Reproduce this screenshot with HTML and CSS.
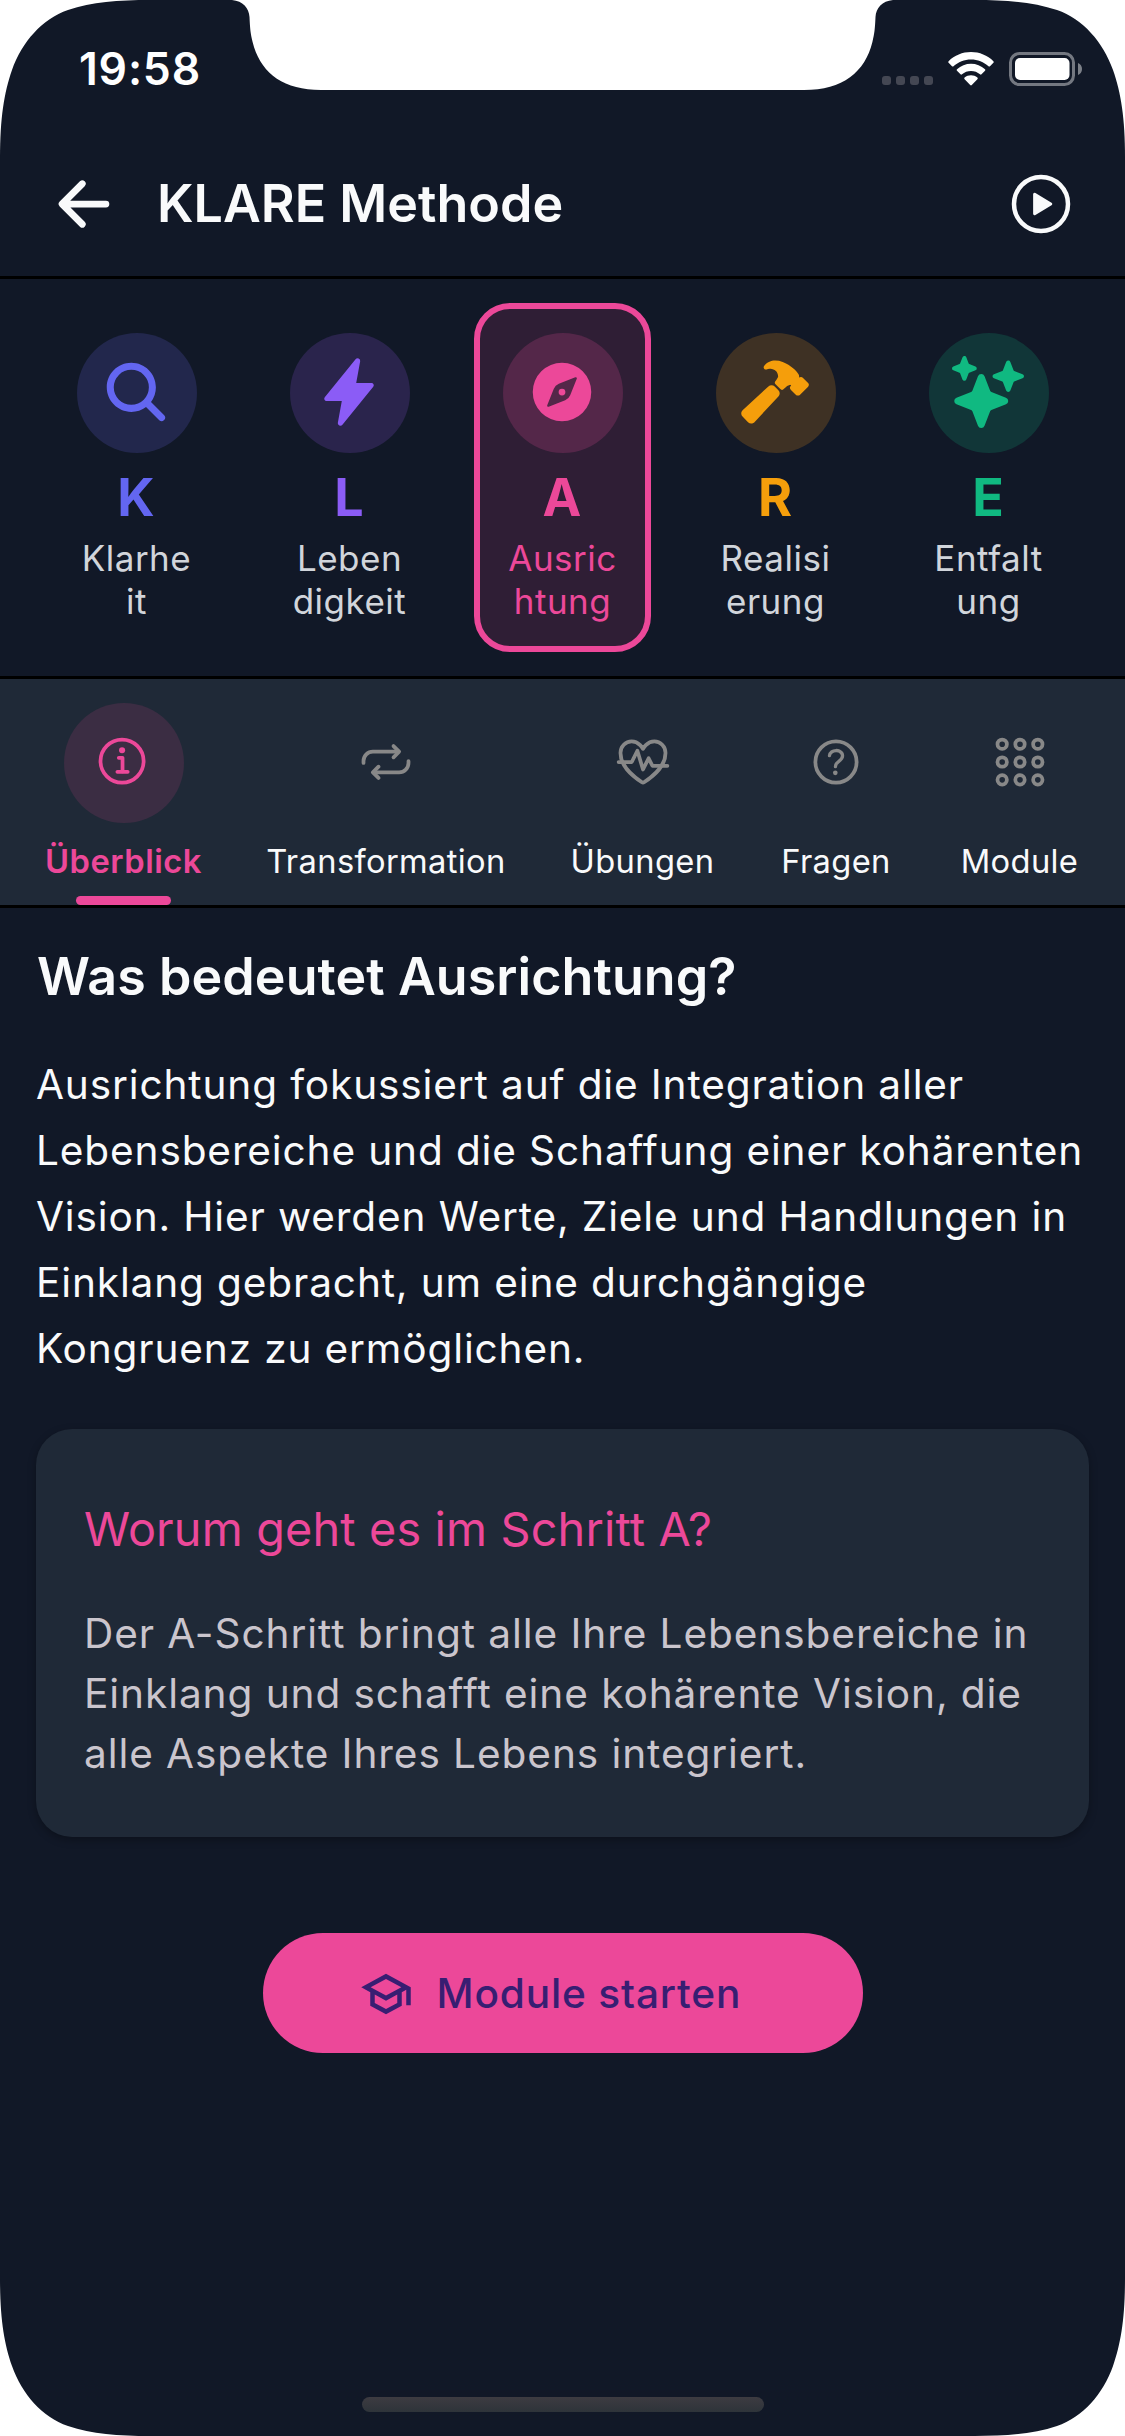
FILE: index.html
```html
<!DOCTYPE html>
<html lang="de">
<head>
<meta charset="utf-8">
<title>KLARE Methode</title>
<link rel="stylesheet" href="styles.css">
</head>
<body>
<div class="screen">
  <div class="statusbar">
    <span class="time">19:58</span>
    <div class="status-icons">
      <span class="signal"><i></i><i></i><i></i><i></i></span>
      <svg class="wifi" viewBox="0 0 46 34" width="46" height="34">
        <path d="M23 0C31.5 0 39.500 3.300 45.400 9.200a1.100 1.100 0 0 1 0 1.500L42 14.200a1.100 1.100 0 0 1-1.500 0C35.800 9.800 29.600 7.400 23 7.400S10.200 9.800 5.500 14.200a1.100 1.100 0 0 1-1.500 0L.6 10.700a1.100 1.100 0 0 1 0-1.500C6.500 3.300 14.500 0 23 0Z"/>
        <path d="M23 11.700c5.200 0 10.200 2 14 5.500a1.100 1.100 0 0 1 0 1.600l-3.500 3.500a1.100 1.100 0 0 1-1.500 0C29.500 20.200 26.400 19 23 19s-6.500 1.200-9 3.300a1.100 1.100 0 0 1-1.500 0L9 18.800a1.100 1.100 0 0 1 0-1.600c3.800-3.500 8.800-5.500 14-5.500Z"/>
        <path d="M23 23.300c2.400 0 4.600.8 6.400 2.300a1.100 1.100 0 0 1 0 1.600l-5.600 5.900a1.100 1.100 0 0 1-1.600 0l-5.600-5.900a1.100 1.100 0 0 1 0-1.600c1.800-1.500 4-2.300 6.400-2.300Z"/>
      </svg>
      <svg class="battery" viewBox="0 0 73 34" width="73" height="34">
        <rect x="1.500" y="1.500" width="63" height="31" rx="9" fill="none" stroke="#fff" stroke-opacity=".42" stroke-width="3"/>
        <rect x="6" y="6" width="54.500" height="22" rx="5" fill="#fff"/>
        <path d="M69 11c2.500 1 4 3.300 4 6s-1.500 5-4 6z" fill="#fff" fill-opacity=".45"/>
      </svg>
    </div>
  </div>

  <header class="header">
    <svg class="icon72" viewBox="0 0 512 512"><path d="M244 400 100 256l144-144M120 256h292" fill="none" stroke="currentColor" stroke-width="48" stroke-linecap="round" stroke-linejoin="round"/></svg>
    <h1 class="title">KLARE Methode</h1>
    <svg class="icon72" viewBox="0 0 512 512"><circle cx="256" cy="256" r="192" fill="none" stroke="currentColor" stroke-width="32"/><path fill="currentColor" d="M216.320 334.440l114.450-69.140a10.890 10.890 0 0 0 0-18.600l-114.450-69.140a10.780 10.780 0 0 0-16.320 9.310v138.260a10.780 10.780 0 0 0 16.320 9.310z"/></svg>
  </header>

  <nav class="steps">
    <div class="step step-k">
      <span class="step-icon"><svg class="icon72" viewBox="0 0 512 512"><path d="M456.690 421.390L362.600 327.300a173.810 173.810 0 0 0 34.840-104.580C397.440 126.380 319.060 48 222.720 48S48 126.380 48 222.720s78.380 174.720 174.720 174.720A173.810 173.810 0 0 0 327.300 362.600l94.090 94.090a25 25 0 0 0 35.300-35.300zM97.920 222.720a124.800 124.800 0 1 1 124.800 124.800 124.950 124.950 0 0 1-124.800-124.800z"/></svg></span>
      <span class="letter">K</span>
      <span class="name">Klarhe<br>it</span>
    </div>
    <div class="step step-l">
      <span class="step-icon"><svg class="icon72" viewBox="0 0 512 512"><path d="M194.820 496a18.360 18.360 0 0 1-18.100-21.530v-.11L204.830 320H96a16 16 0 0 1-12.440-26.060L302.730 23a18.450 18.450 0 0 1 32.800 13.710c0 .3-.08.59-.13.89L307.190 192H416a16 16 0 0 1 12.440 26.060L209.240 489a18.450 18.450 0 0 1-14.420 7z"/></svg></span>
      <span class="letter">L</span>
      <span class="name">Leben<br>digkeit</span>
    </div>
    <div class="step step-a active">
      <span class="step-icon"><svg class="icon72" viewBox="0 0 512 512"><path fill-rule="evenodd" d="M256 48a208 208 0 1 0 0 416 208 208 0 0 0 0-416zM350.670 150.930l-117.200 46.880a64 64 0 0 0-35.660 35.660l-46.880 117.200a8 8 0 0 0 10.400 10.400l117.200-46.880a64 64 0 0 0 35.660-35.660l46.880-117.200a8 8 0 0 0-10.400-10.400z"/><circle cx="256" cy="256" r="24"/></svg></span>
      <span class="letter">A</span>
      <span class="name">Ausric<br>htung</span>
    </div>
    <div class="step step-r">
      <span class="step-icon"><svg class="icon72" viewBox="0 0 512 512"><path d="M280.160 242.790l-26.110-26.120a32 32 0 0 0-45.140-.12L27.380 384.080c-6.610 6.230-10.950 14.170-11.350 23.060a32.110 32.110 0 0 0 9.210 23.940l39 39.430a.46.46 0 0 0 .07.07A32.290 32.290 0 0 0 87 480h1.180c8.890-.33 17-4.640 23.320-11.260l168.680-180.800a32 32 0 0 0-.02-45.150zM490 190l-.31-.31-34.270-33.920a21.460 21.460 0 0 0-15.280-6.260 21.890 21.890 0 0 0-12.790 4.140c0-.43.06-.85.09-1.220.45-6.500 1.150-16.320-5.200-25.220a258 258 0 0 0-24.800-28.740.6.6 0 0 0-.08-.08c-13.320-13.120-42.310-37.830-86.720-55.940A139.550 139.550 0 0 0 257.560 32C226 32 202 46.240 192.810 54.680a119.920 119.920 0 0 0-14.180 16.220 16 16 0 0 0 18.650 24.340 74.450 74.450 0 0 1 8.580-2.630 63.460 63.460 0 0 1 18.450-1.150c13.190 1.090 28.790 7.640 35.690 13.090 11.700 9.410 17.330 22.090 18.260 41.090.18 3.820-7.720 18.140-20 34.480a16 16 0 0 0 1.450 21l34.410 34.410a16 16 0 0 0 22 .62c9.730-8.690 24.550-21.790 29.730-25 7.690-4.730 13.190-5.640 14.700-5.800a19.180 19.180 0 0 1 11.290 2.380 1.240 1.240 0 0 1-.31.95l-1.820 1.730-.3.28a21.520 21.520 0 0 0 .05 30.540l34.260 33.910a21.450 21.450 0 0 0 15.280 6.250 21.700 21.700 0 0 0 15.220-6.200l55.500-54.820c.19-.19.38-.39.56-.59A21.870 21.870 0 0 0 490 190z"/></svg></span>
      <span class="letter">R</span>
      <span class="name">Realisi<br>erung</span>
    </div>
    <div class="step step-e">
      <span class="step-icon"><svg class="icon72" viewBox="0 0 512 512"><path d="M208 512a24.840 24.840 0 0 1-23.340-16l-39.840-103.600a16.060 16.060 0 0 0-9.190-9.190L32 343.340a25 25 0 0 1 0-46.680l103.600-39.840a16.060 16.060 0 0 0 9.190-9.190L184.660 144a25 25 0 0 1 46.680 0l39.840 103.600a16.060 16.060 0 0 0 9.190 9.190l103 39.630a25.490 25.490 0 0 1 16.630 24.100 24.820 24.820 0 0 1-16 22.820l-103.600 39.840a16.060 16.060 0 0 0-9.190 9.190L231.340 496A24.840 24.840 0 0 1 208 512zM88 176a14.670 14.670 0 0 1-13.690-9.400l-16.860-43.840a7.280 7.280 0 0 0-4.210-4.210L9.400 101.690a14.670 14.670 0 0 1 0-27.380l43.840-16.860a7.310 7.310 0 0 0 4.210-4.210L74.160 9.790A15 15 0 0 1 86.230.11a14.670 14.670 0 0 1 15.460 9.290l16.860 43.840a7.310 7.310 0 0 0 4.210 4.210l43.840 16.860a14.670 14.670 0 0 1 0 27.380l-43.840 16.860a7.280 7.280 0 0 0-4.210 4.210l-16.860 43.840A14.670 14.670 0 0 1 88 176zM400 256a16 16 0 0 1-14.930-10.260l-22.840-59.370a8 8 0 0 0-4.600-4.600l-59.370-22.840a16 16 0 0 1 0-29.860l59.370-22.840a8 8 0 0 0 4.600-4.600l22.670-58.950a16.450 16.450 0 0 1 13.170-10.570 16 16 0 0 1 16.860 10.150l22.840 59.370a8 8 0 0 0 4.600 4.600l59.370 22.840a16 16 0 0 1 0 29.860l-59.370 22.840a8 8 0 0 0-4.600 4.600l-22.840 59.370A16 16 0 0 1 400 256z"/></svg></span>
      <span class="letter">E</span>
      <span class="name">Entfalt<br>ung</span>
    </div>
  </nav>

  <nav class="tabs">
    <div class="tab active">
      <span class="tab-icon"><svg viewBox="0 0 512 512"><g fill="none" stroke="currentColor" stroke-width="32" stroke-linecap="round" stroke-linejoin="round"><circle cx="248" cy="248" r="184"/><path d="M220 220h32v116"/><path d="M208 340h88" stroke-miterlimit="10"/></g><circle cx="248" cy="156" r="26" fill="currentColor"/></svg></span>
      <span class="tab-label">Überblick</span>
      <span class="indicator"></span>
    </div>
    <div class="tab">
      <span class="tab-icon"><svg viewBox="0 0 512 512"><g fill="none" stroke="currentColor" stroke-width="32" stroke-linecap="round" stroke-linejoin="round"><path d="M320 120l48 48-48 48"/><path d="M352 168H144a80.240 80.240 0 0 0-80 80v16M192 392l-48-48 48-48"/><path d="M160 344h208a80.240 80.240 0 0 0 80-80v-16"/></g></svg></span>
      <span class="tab-label">Transformation</span>
    </div>
    <div class="tab">
      <span class="tab-icon"><svg viewBox="0 0 512 512"><g fill="none" stroke="currentColor" stroke-width="32" stroke-linecap="round" stroke-linejoin="round"><path d="M352.920 64C288 64 256 128 256 128s-32-64-96.920-64C106.320 64 64.540 108.140 64 160.810c-1.100 109.330 86.730 187.080 183 252.420a16 16 0 0 0 18 0c96.260-65.340 184.090-143.090 183-252.420C447.460 108.140 405.680 64 352.920 64z" transform="translate(0 16)"/><path d="M48 256h112l48-96 48 160 48-96 32 64h128"/></g></svg></span>
      <span class="tab-label">Übungen</span>
    </div>
    <div class="tab">
      <span class="tab-icon"><svg viewBox="0 0 512 512"><circle cx="256" cy="256" r="176" fill="none" stroke="currentColor" stroke-width="32"/><path d="M200 202.290s.84-17.500 19.570-32.570C230.680 160.770 244 158.180 256 158c10.930-.14 20.690 1.670 26.530 4.450 10 4.760 29.470 16.380 29.470 41.090 0 26-17 37.810-36.370 50.800S251 281.430 251 296" fill="none" stroke="currentColor" stroke-width="28" stroke-linecap="round"/><circle cx="250" cy="348" r="20" fill="currentColor"/></svg></span>
      <span class="tab-label">Fragen</span>
    </div>
    <div class="tab">
      <span class="tab-icon"><svg viewBox="0 0 512 512"><g fill="none" stroke="currentColor" stroke-width="32"><circle cx="104" cy="104" r="40"/><circle cx="256" cy="104" r="40"/><circle cx="408" cy="104" r="40"/><circle cx="104" cy="256" r="40"/><circle cx="256" cy="256" r="40"/><circle cx="408" cy="256" r="40"/><circle cx="104" cy="408" r="40"/><circle cx="256" cy="408" r="40"/><circle cx="408" cy="408" r="40"/></g></svg></span>
      <span class="tab-label">Module</span>
    </div>
  </nav>

  <main class="content">
    <h2 class="heading">Was bedeutet Ausrichtung?</h2>
    <p class="intro">Ausrichtung fokussiert auf die Integration aller<br>Lebensbereiche und die Schaffung einer kohärenten<br>Vision. Hier werden Werte, Ziele und Handlungen in<br>Einklang gebracht, um eine durchgängige<br>Kongruenz zu ermöglichen.</p>
    <section class="card">
      <h3 class="card-title">Worum geht es im Schritt A?</h3>
      <p class="card-text">Der A-Schritt bringt alle Ihre Lebensbereiche in<br>Einklang und schafft eine kohärente Vision, die<br>alle Aspekte Ihres Lebens integriert.</p>
    </section>
    <button class="cta" type="button">
      <svg viewBox="0 0 24 24" width="54" height="54"><path fill="currentColor" d="M12 3L1 9L5 11.180V17.180L12 21L19 17.180V11.180L21 10.090V17H23V9L12 3M18.820 9L12 12.720L5.180 9L12 5.280L18.820 9M17 16L12 18.720L7 16V12.270L12 15L17 12.270V16Z"/></svg>
      <span>Module starten</span>
    </button>
  </main>
  <div class="home-indicator"></div>

  <!-- device bezel: notch and rounded display corners -->
  <svg class="bezel" viewBox="0 0 1125 2436" width="1125" height="2436" fill="#fff">
    <defs><path id="corner" d="M0 0H150C118 0 92 2 68 10C42 19 22 42 12 70C4 93 0 118 0 158Z"/></defs>
    <path d="M232 0C243 1 249 8 249.500 17C250.100 29 250.400 33 252.600 42C260 72 282 90 321 90H804C843 90 865 72 872.400 42C874.600 33 874.900 29 875.500 17C876 8 882 1 893 0Z"/>
    <use href="#corner"/>
    <use href="#corner" transform="translate(1125 0) scale(-1 1)"/>
    <use href="#corner" transform="translate(0 2436) scale(1 -1)"/>
    <use href="#corner" transform="translate(1125 2436) scale(-1 -1)"/>
  </svg>
</div>
</body>
</html>
```
FILE: styles.css
```css
* { box-sizing: border-box; margin: 0; padding: 0; }

body {
  background: #fff;
  font-family: Inter, "Liberation Sans", sans-serif;
  color: #f9fafb;
}

svg { display: block; flex: none; }

.screen {
  position: relative;
  display: flex;
  flex-direction: column;
  width: 1125px;
  height: 2436px;
  overflow: hidden;
  background: #111827;
}

.bezel { position: absolute; inset: 0; }

/* Status bar */
.statusbar {
  display: flex;
  justify-content: space-between;
  align-items: flex-start;
  height: 132px;
  padding: 42px 43px 0 79px;
  color: #fff;
}
.time { font-size: 44.5px; line-height: 54px; font-weight: 600; letter-spacing: .8px; }
.status-icons { display: flex; align-items: flex-end; padding-top: 10px; }
.wifi { margin: 0 15px 0 15px; fill: #fff; }
.signal { display: flex; gap: 5px; padding-bottom: 1px; }
.signal i { width: 9px; height: 9px; border-radius: 3px; background: #444753; }

/* Header */
.icon72 { width: 72px; height: 72px; }
.header {
  display: flex;
  align-items: center;
  height: 147px;
  padding: 0 48px;
  border-bottom: 3px solid #000;
}
.title {
  flex: 1;
  margin-left: 37px;
  font-size: 52px;
  line-height: 72px;
  font-weight: 600;
}

/* KLARE steps */
.steps {
  display: grid;
  grid-template-columns: repeat(5, 213px);
  justify-content: center;
  justify-items: center;
  height: 400px;
  padding-top: 24px;
  border-bottom: 3px solid #000;
}
.step {
  display: flex;
  flex-direction: column;
  align-items: center;
  width: 177px;
  height: 349px;
  padding-top: 24px;
  border: 6px solid transparent;
  border-radius: 36px;
  color: var(--accent);
}
.step-k { --accent: #6366f1; --tint: #22274c; }
.step-l { --accent: #8b5cf6; --tint: #2a244c; }
.step-a { --accent: #ec4899; --tint: #542749; }
.step-r { --accent: #f59e0b; --tint: #3e3124; }
.step-e { --accent: #10b981; --tint: #113638; }
.step.active { border-color: #ec4899; background: #2f1e35; }
.step-icon {
  display: flex;
  align-items: center;
  justify-content: center;
  width: 120px;
  height: 120px;
  padding: 0 2px 2px 0;
  border-radius: 50%;
  background: var(--tint);
}
.step-icon svg { fill: currentColor; }
.letter {
  margin-top: 15px;
  padding-right: 1px;
  font-size: 52px;
  line-height: 60px;
  font-weight: 700;
}
.name {
  margin-top: 9px;
  font-size: 35px;
  line-height: 43px;
  letter-spacing: .5px;
  text-align: center;
  color: #d1d5db;
}
.step.active .name { color: #ec4899; }

/* Section tabs */
.tabs {
  display: grid;
  grid-template-columns: 241px 284px 229px 158px 209px;
  height: 229px;
  padding-left: 3px;
  background: #1f2937;
  border-bottom: 3px solid #000;
}
.tab {
  position: relative;
  display: flex;
  flex-direction: column;
  align-items: center;
  padding-top: 24px;
}
.tab-icon {
  display: flex;
  align-items: center;
  justify-content: center;
  width: 120px;
  height: 120px;
  padding-bottom: 2px;
  border-radius: 50%;
  color: #888;
}
.tab-icon svg { width: 60px; height: 60px; }
.tab-label { margin-top: 18px; font-size: 32.7px; line-height: 40px; letter-spacing: .35px; }
.tab.active .tab-icon { padding-right: 2px; background: #3b2d43; color: #ec4899; }
.tab.active .tab-label { letter-spacing: .5px; color: #ec4899; font-weight: 600; }
.indicator {
  position: absolute;
  bottom: 0;
  left: 73px;
  width: 95px;
  height: 9px;
  border-radius: 4.5px;
  background: #ec4899;
}

/* Content */
.content { display: flex; flex-direction: column; padding: 39px 36px 0; }
.heading {
  margin-left: 1px;
  font-size: 52px;
  line-height: 60px;
  font-weight: 600;
  letter-spacing: .07px;
}
.intro {
  margin-top: 45px;
  font-size: 40.6px;
  line-height: 66px;
  letter-spacing: .86px;
  white-space: nowrap;
}
.card {
  height: 408px;
  margin-top: 47px;
  padding: 64px 48px 0;
  border-radius: 36px;
  background: #1f2937;
  box-shadow: 0 3px 9px rgba(0, 0, 0, .3);
}
.card-title { font-size: 46.8px; line-height: 72px; font-weight: 400; letter-spacing: .15px; color: #ec4899; }
.card-text {
  margin-top: 39px;
  font-size: 40.6px;
  line-height: 60px;
  letter-spacing: .92px;
  color: #cac5cd;
  white-space: nowrap;
}
.cta {
  display: flex;
  align-items: center;
  align-self: center;
  gap: 24px;
  width: 600px;
  height: 120px;
  margin-top: 96px;
  padding: 2px 96px 0;
  border: 0;
  border-radius: 60px;
  background: #ec4899;
  color: #381e72;
  font: 500 40.6px/60px Inter, "Liberation Sans", sans-serif;
  letter-spacing: .85px;
}

.home-indicator {
  width: 402px;
  height: 15px;
  margin: auto auto 24px;
  border-radius: 7.5px;
  background: linear-gradient(#3d3b41, #2e343a);
}
```
